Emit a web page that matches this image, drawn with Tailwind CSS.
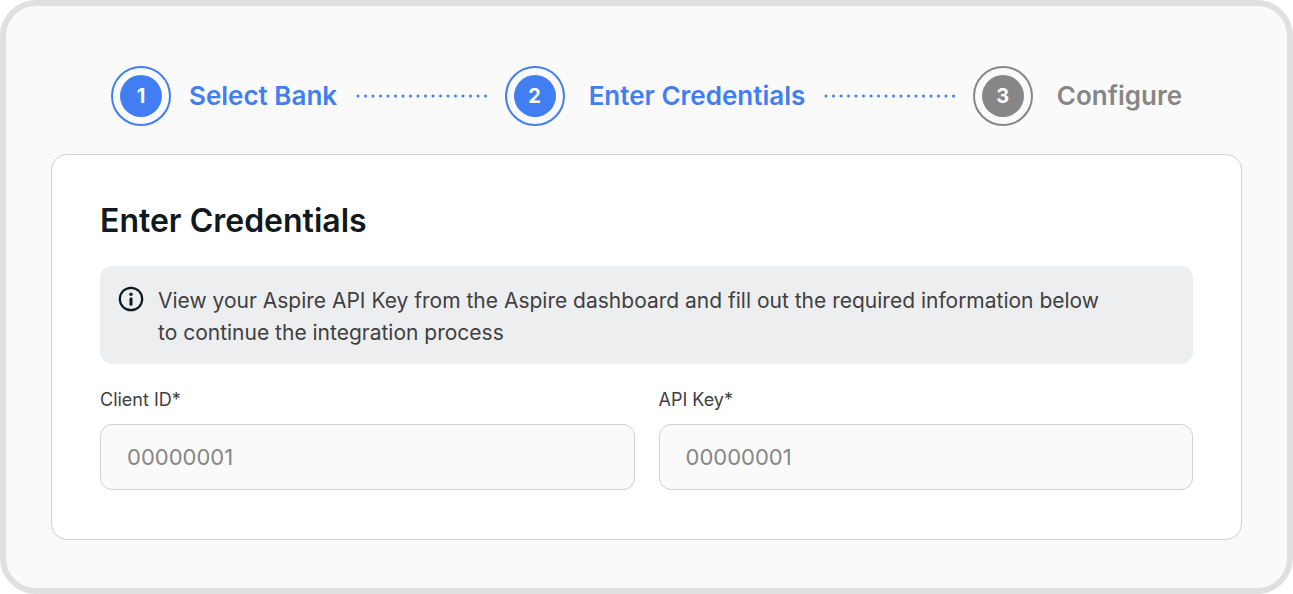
<!DOCTYPE html>
<html lang="en">
<head>
    <meta charset="UTF-8">
    <meta name="viewport" content="width=device-width, initial-scale=1.0">
    <title>Enter Credentials</title>
    <script src="https://cdn.jsdelivr.net/npm/@tailwindcss/browser@4"></script>
</head>
<body class="bg-white font-['Inter',sans-serif]">

    <main class="min-h-screen bg-[#fafafa] border-6 border-[#e0e0e0] rounded-[36px] px-[45px] pt-15 pb-12">

        <!-- Stepper -->
        <ol class="flex items-center px-15 text-[26px] leading-8 font-semibold text-[#407ef1]">
            <li class="flex items-center gap-[18px]">
                <span class="size-15 shrink-0 rounded-full border-2 border-[#407ef1] p-[7px]">
                    <span class="flex size-full items-center justify-center rounded-full bg-[#407ef1] text-xl font-bold text-white">1</span>
                </span>
                <span class="whitespace-nowrap">Select Bank</span>
            </li>
            <li class="mr-4 ml-[18px] min-w-8 flex-1" aria-hidden="true">
                <svg class="block h-1 w-full" fill="none" stroke="#407ef1" stroke-width="3" stroke-linecap="round" stroke-dasharray="0 7.5">
                    <line x1="3" y1="2" x2="100%" y2="2" />
                </svg>
            </li>
            <li class="flex items-center gap-6" aria-current="step">
                <span class="size-15 shrink-0 rounded-full border-2 border-[#407ef1] p-[7px]">
                    <span class="flex size-full items-center justify-center rounded-full bg-[#407ef1] text-xl font-bold text-white">2</span>
                </span>
                <span class="whitespace-nowrap">Enter Credentials</span>
            </li>
            <li class="mr-4 ml-[18px] min-w-8 flex-1" aria-hidden="true">
                <svg class="block h-1 w-full" fill="none" stroke="#407ef1" stroke-width="3" stroke-linecap="round" stroke-dasharray="0 7.5">
                    <line x1="3" y1="2" x2="100%" y2="2" />
                </svg>
            </li>
            <li class="flex items-center gap-6 text-[#868686]">
                <span class="size-15 shrink-0 rounded-full border-2 border-[#868686] p-[7px]">
                    <span class="flex size-full items-center justify-center rounded-full bg-[#868686] text-xl font-bold text-white">3</span>
                </span>
                <span class="whitespace-nowrap">Configure</span>
            </li>
        </ol>

        <!-- Credentials card -->
        <form class="mt-7 rounded-2xl border border-[#d0d0d6] bg-white px-12 pt-[46px] pb-[49px]">
            <h1 class="text-[32px] leading-10 font-semibold text-[#101820]">Enter Credentials</h1>

            <div class="mt-[25px] flex gap-[14px] rounded-xl bg-[#edeef0] px-[18px] pt-[19px] pb-[15px]">
                <svg class="mt-px size-[26px] shrink-0" viewBox="0 0 26 26" fill="none" stroke="#101820" stroke-linecap="round">
                    <circle cx="13" cy="13" r="11.2" stroke-width="2.2" />
                    <path d="M13 12.8v5.4" stroke-width="3" />
                    <circle cx="13" cy="8.2" r="1.7" fill="#101820" stroke="none" />
                </svg>
                <p class="max-w-[960px] text-[21px] leading-8 text-[#404042]">View your Aspire API Key from the Aspire dashboard and fill out the required information below to continue the integration process</p>
            </div>

            <div class="mt-6 grid grid-cols-2 gap-6">
                <div>
                    <label for="client-id" class="block text-lg leading-6 text-[#404042]">Client ID*</label>
                    <input id="client-id" type="text" placeholder="00000001" class="mt-3 block h-[66px] w-full rounded-xl border border-[#d0d0d6] bg-[#fafafa] px-[26px] text-[22px] text-[#404042] outline-none placeholder:text-[#868686] focus:border-[#407ef1]">
                </div>
                <div>
                    <label for="api-key" class="block text-lg leading-6 text-[#404042]">API Key*</label>
                    <input id="api-key" type="text" placeholder="00000001" class="mt-3 block h-[66px] w-full rounded-xl border border-[#d0d0d6] bg-[#fafafa] px-[26px] text-[22px] text-[#404042] outline-none placeholder:text-[#868686] focus:border-[#407ef1]">
                </div>
            </div>
        </form>

    </main>

</body>
</html>
